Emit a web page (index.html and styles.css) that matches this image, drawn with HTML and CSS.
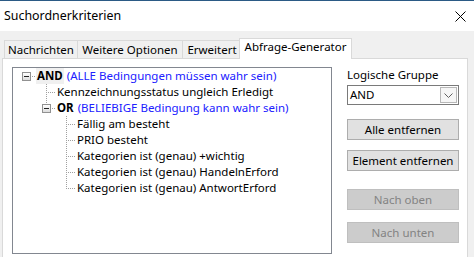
FILE: index.html
```html
<!DOCTYPE html>
<html lang="de">
<head>
<meta charset="utf-8">
<title>Suchordnerkriterien</title>
<link rel="stylesheet" href="styles.css">
</head>
<body>
<div class="window">
  <div class="titlebar">
    <span class="title">Suchordnerkriterien</span>
    <svg class="close" width="11" height="11" viewBox="0 0 11 11"><path d="M0.5 0.5 L10.5 10.5 M10.5 0.5 L0.5 10.5" stroke="#000" stroke-width="1" fill="none"/></svg>
  </div>
  <div class="content">
    <div class="tabs">
      <div class="tab t1">Nachrichten</div>
      <div class="tab t2">Weitere Optionen</div>
      <div class="tab t3">Erweitert</div>
      <div class="tab active t4">Abfrage-Generator</div>
    </div>
    <div class="panel">
      <div class="tree">
        <div class="row">
          <span class="node root"><span class="box"></span></span>
          <span class="label sel"><b>AND</b></span>
          <span class="note">(ALLE Bedingungen müssen wahr sein)</span>
        </div>
        <div class="row">
          <span class="node blank"></span>
          <span class="node mid"></span>
          <span class="label">Kennzeichnungsstatus ungleich Erledigt</span>
        </div>
        <div class="row">
          <span class="node blank"></span>
          <span class="node last"><span class="box"></span></span>
          <span class="label"><b>OR</b></span>
          <span class="note">(BELIEBIGE Bedingung kann wahr sein)</span>
        </div>
        <div class="row">
          <span class="node blank"></span>
          <span class="node blank"></span>
          <span class="node mid"></span>
          <span class="label">Fällig am besteht</span>
        </div>
        <div class="row">
          <span class="node blank"></span>
          <span class="node blank"></span>
          <span class="node mid"></span>
          <span class="label">PRIO besteht</span>
        </div>
        <div class="row">
          <span class="node blank"></span>
          <span class="node blank"></span>
          <span class="node mid"></span>
          <span class="label">Kategorien ist (genau) +wichtig</span>
        </div>
        <div class="row">
          <span class="node blank"></span>
          <span class="node blank"></span>
          <span class="node mid"></span>
          <span class="label">Kategorien ist (genau) HandelnErford</span>
        </div>
        <div class="row">
          <span class="node blank"></span>
          <span class="node blank"></span>
          <span class="node last"></span>
          <span class="label">Kategorien ist (genau) AntwortErford</span>
        </div>
      </div>
      <div class="side">
        <div class="caption">Logische Gruppe</div>
        <div class="combo">
          <span class="combo-value">AND</span>
          <span class="combo-btn"><svg width="9" height="5" viewBox="0 0 9 5"><path d="M0.5 0.5 L4.5 4.5 L8.5 0.5" stroke="#606060" stroke-width="1" fill="none"/></svg></span>
        </div>
        <button class="btn b-alle" type="button">Alle entfernen</button>
        <button class="btn b-element" type="button">Element entfernen</button>
        <button class="btn b-oben" type="button" disabled>Nach oben</button>
        <button class="btn b-unten" type="button" disabled>Nach unten</button>
      </div>
    </div>
  </div>
</div>
</body>
</html>
```
FILE: styles.css
```css
* { box-sizing: border-box; }
html, body { margin: 0; padding: 0; }
body {
  background: #f0f0f0;
  font-family: "Noto Sans", "Open Sans", sans-serif;
  font-size: 11.5px;
  color: #000;
}
.window {
  width: 474px;
  height: 257px;
  overflow: hidden;
  background: #f0f0f0;
  display: flex;
  flex-direction: column;
}
.titlebar {
  height: 31px;
  flex: none;
  background: #fff;
  border-top: 1px solid #2b5a85;
  display: flex;
  align-items: center;
  justify-content: space-between;
  padding: 0 8px 0 4px;
}
.title { line-height: 16px; font-size: 12.4px; }
.close { display: block; }

.content { padding: 7px 0 0 2px; }
.tabs {
  display: flex;
  align-items: flex-end;
  height: 20px;
  padding-left: 2px;
}
.tab {
  height: 18px;
  border: 1px solid #d9d9d9;
  border-bottom: none;
  background: #f0f0f0;
  line-height: 16px;
  padding-top: 1px;
  text-align: center;
  white-space: nowrap;
  margin-left: -1px;
}
.t1 { width: 74px; margin-left: 0; }
.t2 { width: 106px; }
.t3 { width: 60px; }
.t4 { width: 113px; margin-left: -3px; }
.tab.active {
  height: 21px;
  margin-bottom: -1px;
  padding-top: 0;
  background: #fff;
  position: relative;
  z-index: 1;
}

.panel {
  width: 466px;
  height: 210px;
  background: #fff;
  border: 1px solid #d9d9d9;
  display: flex;
  align-items: flex-start;
  padding: 8px 0 0 9px;
}

.tree {
  width: 320px;
  height: 187px;
  flex: none;
  border: 1px solid #828790;
  background: #fff;
  padding-left: 3px;
}
.row {
  height: 16px;
  display: flex;
  align-items: flex-start;
  white-space: nowrap;
  line-height: 16px;
}
.node {
  width: 20px;
  height: 16px;
  flex: none;
  display: flex;
  align-items: flex-start;
  background-repeat: no-repeat;
}
.node.root {
  background-image: repeating-linear-gradient(90deg, #a0a0a0 0 1px, transparent 1px 2px);
  background-position: 10px 8px;
  background-size: 10px 1px;
}
.node.mid {
  background-image:
    repeating-linear-gradient(90deg, #a0a0a0 0 1px, transparent 1px 2px),
    repeating-linear-gradient(180deg, #a0a0a0 0 1px, transparent 1px 2px);
  background-position: 10px 8px, 10px 0;
  background-size: 10px 1px, 1px 16px;
}
.node.last {
  background-image:
    repeating-linear-gradient(90deg, #a0a0a0 0 1px, transparent 1px 2px),
    repeating-linear-gradient(180deg, #a0a0a0 0 1px, transparent 1px 2px);
  background-position: 10px 8px, 10px 0;
  background-size: 10px 1px, 1px 9px;
}
.box {
  width: 9px;
  height: 9px;
  margin: 4px 0 0 6px;
  border: 1px solid #919191;
  background:
    linear-gradient(#222, #222) center / 5px 1px no-repeat,
    linear-gradient(#ffffff, #dcdcdc);
}
.label { padding: 0 1px; }
.label.sel { background: #f0f0f0; }
.note { margin-left: 3px; color: #2020ff; }

.side {
  width: 112px;
  margin-left: 15px;
  display: flex;
  flex-direction: column;
}
.caption { line-height: 16px; }
.combo {
  margin-top: 2px;
  height: 20px;
  border: 1px solid #7a7a7a;
  background: #fff;
  display: flex;
  align-items: flex-start;
  padding: 1px 1px 0 2px;
}
.combo-value { flex: 1; line-height: 16px; }
.combo-btn {
  width: 17px;
  height: 16px;
  border: 1px solid #b8b8b8;
  background: #f6f6f6;
  display: flex;
  align-items: center;
  justify-content: center;
}
.combo-btn svg { display: block; }
.btn {
  height: 21px;
  width: 112px;
  padding: 0;
  font: inherit;
  line-height: 16px;
  color: #000;
  background: #e1e1e1;
  border: 1px solid #adadad;
  text-align: center;
}
.btn:disabled {
  background: #cccccc;
  border-color: #bfbfbf;
  color: #838383;
}
.b-alle { margin-top: 14px; }
.b-element { margin-top: 10px; }
.b-oben { margin-top: 18px; }
.b-unten { margin-top: 12px; }
```
